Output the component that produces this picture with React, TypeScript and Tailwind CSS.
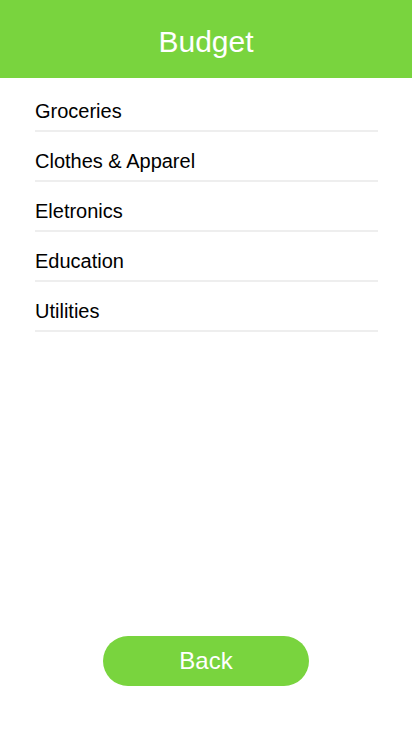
const categories = ['Groceries', 'Clothes & Apparel', 'Eletronics', 'Education', 'Utilities'];

export default function App() {
  return (
    <div className="flex min-h-screen flex-col bg-white font-['Liberation_Sans',Arial,sans-serif]">
      <header className="flex h-[78px] items-center justify-center bg-[#79d43e] pt-[6px]">
        <h1 className="text-[30px] leading-[30px] text-white">Budget</h1>
      </header>

      <ul className="mx-[35px] mt-1 w-[343px]">
        {categories.map((name) => (
          <li
            key={name}
            className="border-b-2 border-[#eeeeee] pt-[17px] pb-[7px] text-[20px] leading-[24px] text-black"
          >
            {name}
          </li>
        ))}
      </ul>

      <div className="mt-auto mb-[46px] flex justify-center">
        <button className="h-[50px] w-[206px] rounded-full bg-[#79d43e] text-[24px] leading-[24px] text-white">
          Back
        </button>
      </div>
    </div>
  );
}
